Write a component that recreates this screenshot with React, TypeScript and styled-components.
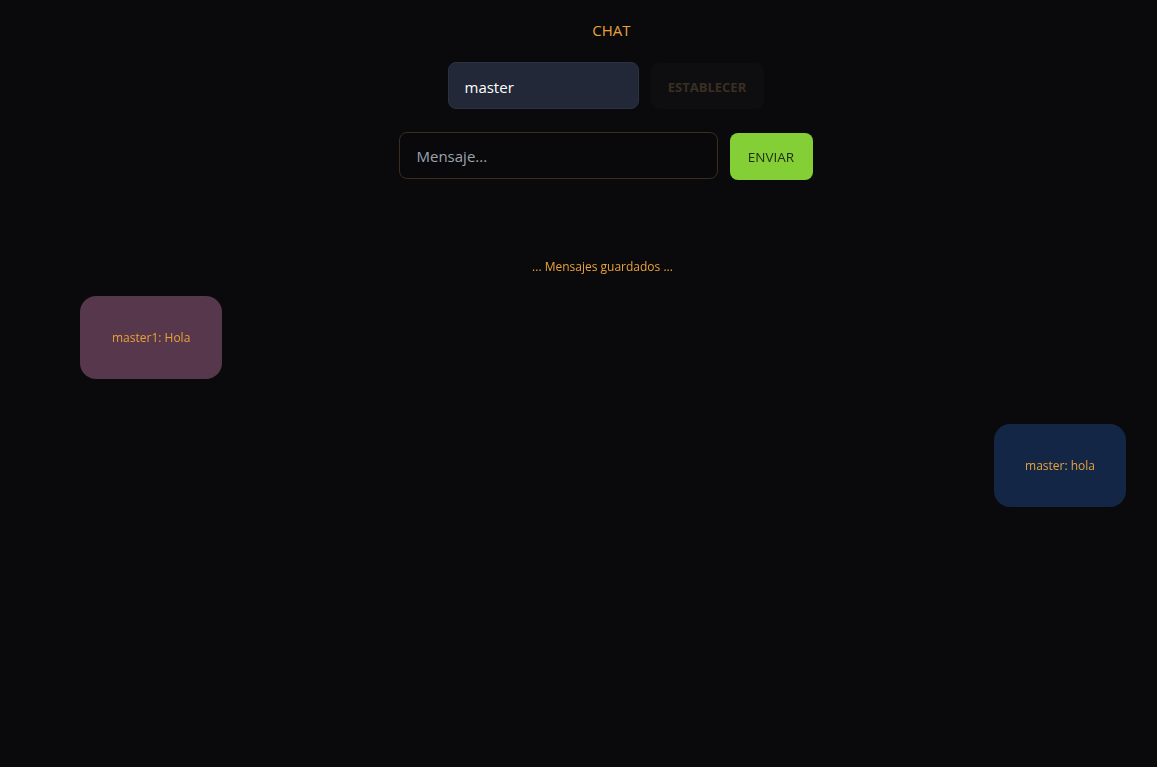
import React from "react";
import styled, { createGlobalStyle } from "styled-components";

const Global = createGlobalStyle`
  html, body { margin: 0; padding: 0; background: #0a0a0c; }
  body { font-family: "Open Sans", "Noto Sans", sans-serif; min-height: 767px; }
  * { box-sizing: border-box; }
`;

const Page = styled.div`
  min-height: 767px;
  background: #0a0a0c;
  display: flex;
  flex-direction: column;
`;

const Header = styled.div`
  display: flex;
  flex-direction: column;
  align-items: center;
  padding-left: 54px;
`;

const Title = styled.h1`
  margin: 20px 0 0 12px;
  font-size: 15px;
  font-weight: 400;
  line-height: 20px;
  color: #e8a23a;
`;

const Row = styled.div<{ $mt: number }>`
  display: flex;
  align-items: flex-start;
  gap: 12px;
  margin-top: ${(p) => p.$mt}px;
`;

const NameInput = styled.input`
  width: 191px;
  height: 47px;
  border-radius: 8px;
  border: 1px solid #2c3242;
  background: #222838;
  color: #ffffff;
  font: 400 15px "Open Sans", sans-serif;
  padding: 2px 16px 0;
  outline: none;
  caret-color: #ffffff;
`;

const GhostButton = styled.button`
  width: 113px;
  height: 46px;
  margin-top: 1px;
  border-radius: 8px;
  border: none;
  background: #0e0e10;
  color: #3a2f22;
  font: 700 13px "Open Sans", sans-serif;
  padding-top: 2px;
`;

const MsgInput = styled.input`
  width: 319px;
  height: 47px;
  border-radius: 8px;
  border: 1px solid #3a2e1c;
  background: #09090b;
  color: #e5e7eb;
  font: 400 15px "Open Sans", sans-serif;
  padding: 0 17px;
  outline: none;
  &::placeholder { color: #9ca3af; }
`;

const SendButton = styled.button`
  width: 83px;
  height: 47px;
  border-radius: 8px;
  border: none;
  background: #84cf36;
  color: #23300f;
  font: 400 13.5px "Open Sans", sans-serif;
  margin-top: 1px;
`;

const Saved = styled.div`
  margin-top: 79px;
  font-size: 12px;
  line-height: 16px;
  color: #e8a23a;
  padding-left: 48px;
  text-align: center;
`;

const Messages = styled.div`
  display: flex;
  flex-direction: column;
  gap: 45px;
  padding: 21px 31px 0 80px;
`;

const Bubble = styled.div<{ $mine?: boolean }>`
  align-self: ${(p) => (p.$mine ? "flex-end" : "flex-start")};
  background: ${(p) => (p.$mine ? "#132646" : "#56374b")};
  border-radius: 16px;
  padding: 32px ${(p) => (p.$mine ? 31 : 32)}px;
  font-size: 12px;
  line-height: 19px;
  color: #e8a23a;
  white-space: nowrap;
`;

export default function App() {
  return (
    <Page>
      <Global />
      <Header>
        <Title>CHAT</Title>
        <Row $mt={22}>
          <NameInput defaultValue="master" autoFocus />
          <GhostButton>ESTABLECER</GhostButton>
        </Row>
        <Row $mt={23}>
          <MsgInput placeholder="Mensaje..." />
          <SendButton>ENVIAR</SendButton>
        </Row>
      </Header>
      <Saved>... Mensajes guardados ...</Saved>
      <Messages>
        <Bubble>master1: Hola</Bubble>
        <Bubble $mine>master: hola</Bubble>
      </Messages>
    </Page>
  );
}
